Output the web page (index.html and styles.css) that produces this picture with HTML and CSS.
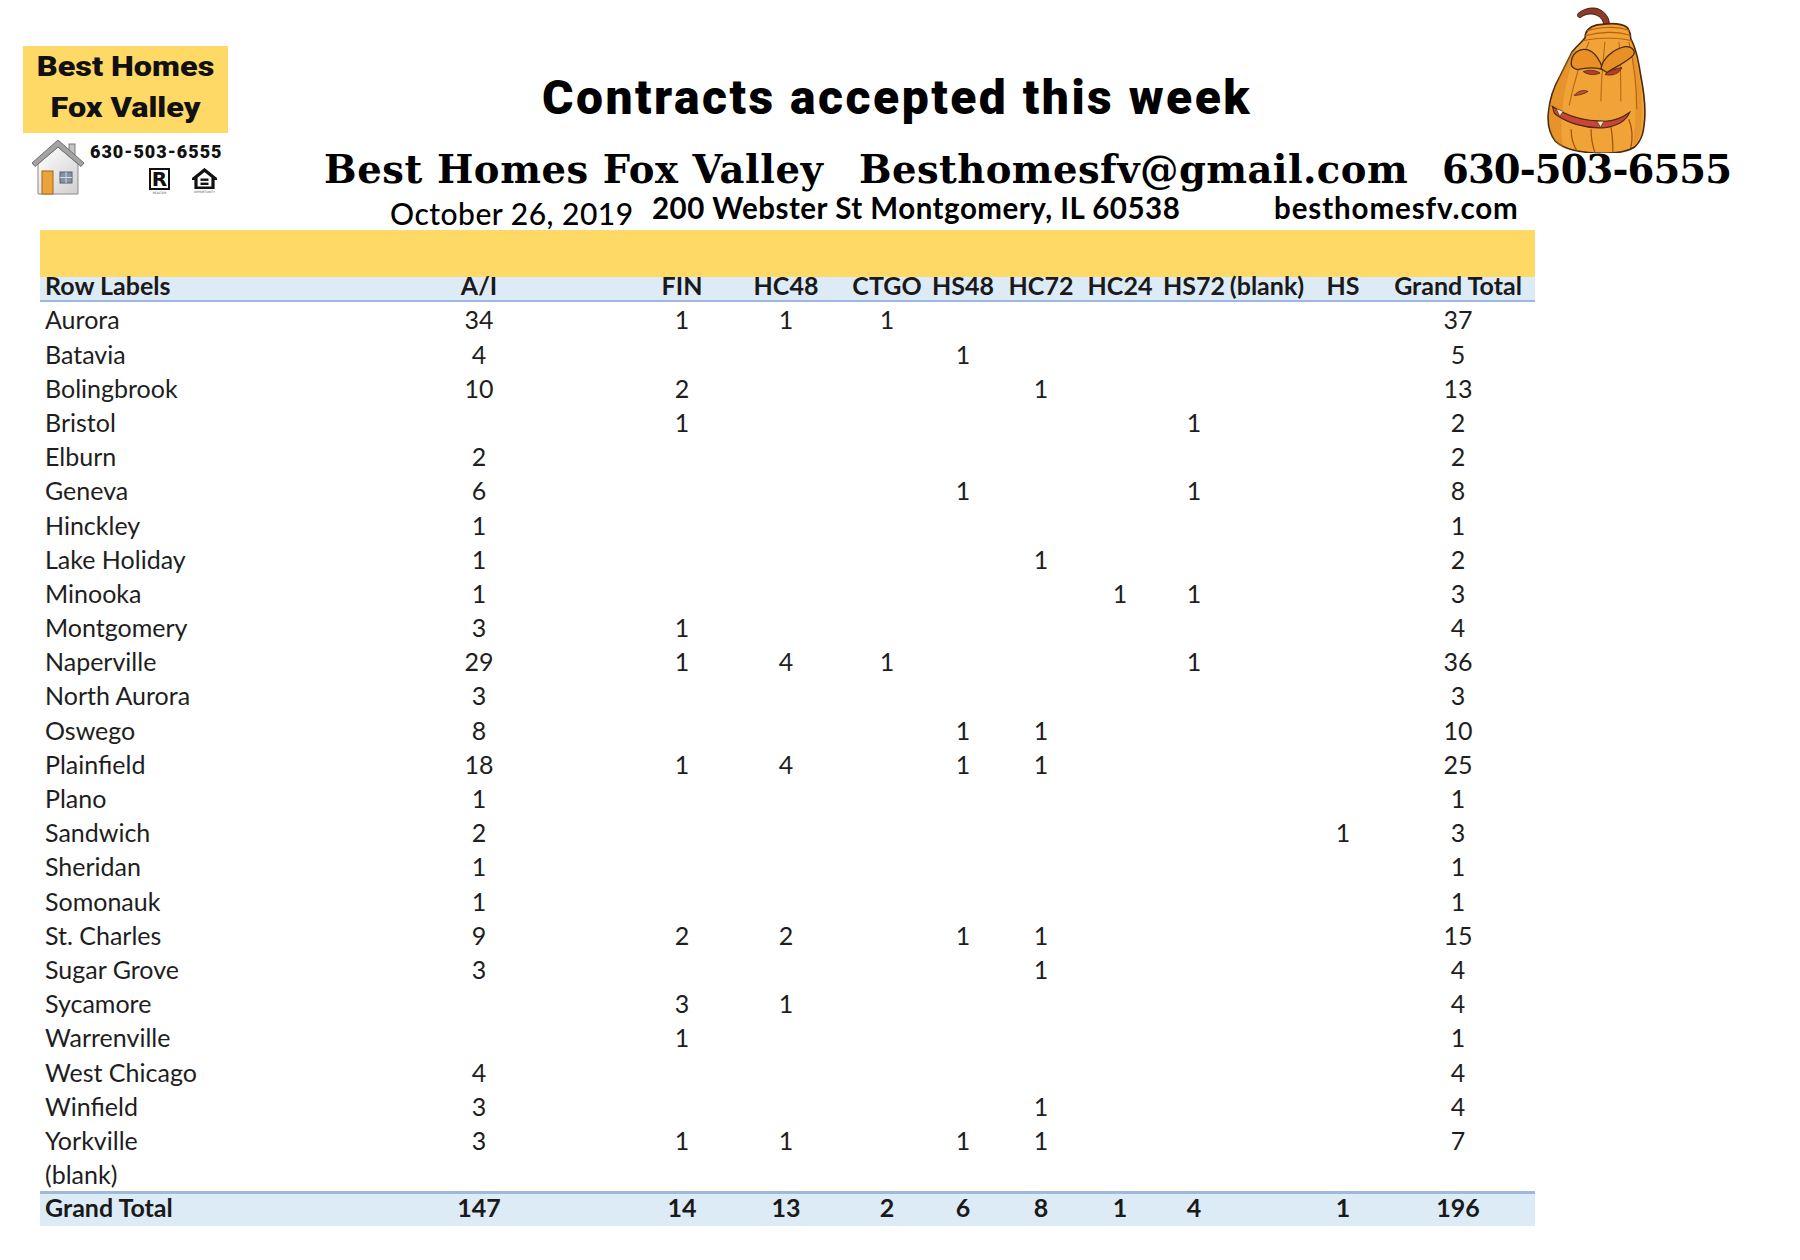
FILE: index.html
```html
<!DOCTYPE html>
<html lang="en">
<head>
<meta charset="utf-8">
<title>Contracts accepted this week</title>
<link rel="stylesheet" href="styles.css">
</head>
<body>
<div class="page">
  <header class="top">
    <div class="logo">
      <div class="logo-box">
        <div class="logo-line">Best Homes</div>
        <div class="logo-line">Fox Valley</div>
      </div>
      <div class="logo-foot">
        <svg class="house" width="54" height="56" viewBox="0 0 54 56">
          <defs>
            <linearGradient id="wall" x1="0" y1="0" x2="1" y2="1">
              <stop offset="0" stop-color="#ffffff"/>
              <stop offset="1" stop-color="#cfcfcf"/>
            </linearGradient>
          </defs>
          <rect x="38" y="5" width="6" height="13" fill="#c4c4c4" stroke="#7a7a7a" stroke-width="1"/>
          <polygon points="7,25 27,8 47,25 47,55 7,55" fill="url(#wall)" stroke="#8a8a8a" stroke-width="1"/>
          <polygon points="27,1 53,24 50,27.5 27,8 4,27.5 1,24" fill="#a3a3a3" stroke="#6e6e6e" stroke-width="1"/>
          <rect x="11" y="32" width="11" height="23" fill="#e9a53c" stroke="#a8690f" stroke-width="1"/>
          <rect x="29" y="33" width="12" height="11" fill="#7f93ab" stroke="#5e5e5e" stroke-width="1"/>
          <line x1="35" y1="33" x2="35" y2="44" stroke="#d9d9d9" stroke-width="1"/>
          <line x1="29" y1="38.5" x2="41" y2="38.5" stroke="#d9d9d9" stroke-width="1"/>
        </svg>
        <div class="contact">
          <div class="logo-phone">630-503-6555</div>
          <div class="badges">
            <div class="badge">
              <div class="realtor">R</div>
              <div class="tiny">REALTOR</div>
            </div>
            <div class="badge">
              <svg width="25" height="21" viewBox="0 0 25 21">
                <polygon points="12.5,2 23,10.5 21,10.5 21,20 4,20 4,10.5 2,10.5" fill="none" stroke="#111" stroke-width="3.2" stroke-linejoin="miter"/>
                <rect x="8.5" y="10.5" width="8" height="2.4" fill="#111"/>
                <rect x="8.5" y="14.6" width="8" height="2.4" fill="#111"/>
              </svg>
              <div class="tiny">OPPORTUNITY</div>
            </div>
          </div>
        </div>
      </div>
    </div>
    <div class="headings">
      <div class="title-row">
        <h1 class="title">Contracts accepted this week</h1>
        <svg class="pumpkin" width="100" height="147" viewBox="0 0 100 148">
          <path d="M62 21 C64 13 58 5 50 2.5 C44 1 36 3 31 7.5 C29.5 9.5 31 12 33.5 11.5 C38 8 44 7 49 9 C54 11 57 15 57 21 Z" fill="#8e3b2b" stroke="#3f1a10" stroke-width="1"/>
          <path d="M60 18 C70 17 80 19 82 24 C84 28 84 30 84 33 C88 40 92 56 94 70 C97 85 99 100 98 114 C97 126 96 134 88 142 C78 148 62 149 48 148 C32 147 18 145 8 136 C2 128 0 118 1 108 C2 95 6 82 13 70 C18 60 22 52 25 46 C30 40 35 36 38 32 C38 26 42 21 50 19 Z" fill="#f2a338" stroke="#4a2a10" stroke-width="1.6"/>
          <path d="M25 46 C18 58 6 82 2 104 C0 122 4 136 16 143 C12 120 14 84 30 44 Z" fill="#d7801c" opacity="0.45"/>
          <path d="M88 50 C94 70 97 100 94 126 C92 134 90 138 86 142 C90 116 90 80 84 46 Z" fill="#d7801c" opacity="0.4"/>
          <path d="M40 25 C52 21 70 20 83 25" fill="none" stroke="#b4600e" stroke-width="1.2"/>
          <path d="M38 30 C52 26 70 25 84 30" fill="none" stroke="#b4600e" stroke-width="1.2"/>
          <path d="M36 35 C48 32 70 31 85 35" fill="none" stroke="#b4600e" stroke-width="1"/>
          <path d="M42 36 C34 54 26 80 22 100" fill="none" stroke="#b86611" stroke-width="1.1"/>
          <path d="M58 36 C56 56 54 78 54 96" fill="none" stroke="#b86611" stroke-width="1.1"/>
          <path d="M72 36 C74 58 74 80 74 96" fill="none" stroke="#b86611" stroke-width="1.1"/>
          <path d="M82 36 C88 60 90 84 90 104" fill="none" stroke="#b86611" stroke-width="1.1"/>
          <path d="M24 124 C24 132 26 140 30 146" fill="none" stroke="#9a520c" stroke-width="1.2"/>
          <path d="M44 124 C44 134 46 142 48 148" fill="none" stroke="#9a520c" stroke-width="1.2"/>
          <path d="M64 122 C66 132 66 140 66 147" fill="none" stroke="#9a520c" stroke-width="1.2"/>
          <path d="M82 114 C86 124 86 134 84 143" fill="none" stroke="#9a520c" stroke-width="1.2"/>
          <path d="M24 58 C24 48 32 42 40 44 C48 46 54 56 56 64 C50 62 40 62 30 64 C26 63 24 61 24 58 Z" fill="#e88f26" stroke="#4a2a10" stroke-width="1.3"/>
          <path d="M54 63 C56 52 66 44 78 41 C84 40 89 44 87 49 C81 56 71 60 60 67 Z" fill="#e88f26" stroke="#4a2a10" stroke-width="1.3"/>
          <path d="M36 66 C42 64 48 64 53 67.5 C47 70 41 69.5 36 66 Z" fill="#b83a2c" stroke="#4a2a10" stroke-width="0.8"/>
          <path d="M58 69 C62 65 68 63 75 62 C73 67.5 66 71 58 69 Z" fill="#b83a2c" stroke="#4a2a10" stroke-width="0.8"/>
          <path d="M27 90 C31 85.5 36 84 41 86 C37 88.5 32 90 27 90 Z" fill="#c8503a" stroke="#4a2a10" stroke-width="0.8"/>
          <path d="M5 101 C18 110 36 116 58 116 C68 116 76 112 83 107 C79 116 70 121 58 122.5 C38 124 18 117 7 108 Z" fill="#c8453a" stroke="#4a2a10" stroke-width="1.1"/>
          <path d="M9 103.5 L12.5 111 L16 106 Z" fill="#f4e7c3" stroke="#4a2a10" stroke-width="0.6"/>
          <path d="M50 116 L53.5 122 L57 116 Z" fill="#f4e7c3" stroke="#4a2a10" stroke-width="0.6"/>
        </svg>
      </div>
      <div class="contact-line">
        <span class="seg1">Best Homes Fox Valley</span>
        <span class="seg2">Besthomesfv@gmail.com</span>
        <span class="seg3">630-503-6555</span>
      </div>
      <div class="info-line">
        <span class="date">October 26, 2019</span>
        <span class="addr">200 Webster St Montgomery, IL 60538</span>
        <span class="site">besthomesfv.com</span>
      </div>
    </div>
  </header>

  <section class="pivot">
    <div class="band"></div>
    <div class="row head">
      <div class="lbl">Row Labels</div>
      <div class="ai">A/I</div>
      <div class="fin">FIN</div>
      <div class="hc48">HC48</div>
      <div class="ctgo">CTGO</div>
      <div class="hs48">HS48</div>
      <div class="hc72">HC72</div>
      <div class="hc24">HC24</div>
      <div class="hs72">HS72</div>
      <div class="blk">(blank)</div>
      <div class="hs">HS</div>
      <div class="gt">Grand Total</div>
    </div>
    <div class="row"><div class="lbl">Aurora</div><div class="ai">34</div><div class="fin">1</div><div class="hc48">1</div><div class="ctgo">1</div><div class="gt">37</div></div>
    <div class="row"><div class="lbl">Batavia</div><div class="ai">4</div><div class="hs48">1</div><div class="gt">5</div></div>
    <div class="row"><div class="lbl">Bolingbrook</div><div class="ai">10</div><div class="fin">2</div><div class="hc72">1</div><div class="gt">13</div></div>
    <div class="row"><div class="lbl">Bristol</div><div class="fin">1</div><div class="hs72">1</div><div class="gt">2</div></div>
    <div class="row"><div class="lbl">Elburn</div><div class="ai">2</div><div class="gt">2</div></div>
    <div class="row"><div class="lbl">Geneva</div><div class="ai">6</div><div class="hs48">1</div><div class="hs72">1</div><div class="gt">8</div></div>
    <div class="row"><div class="lbl">Hinckley</div><div class="ai">1</div><div class="gt">1</div></div>
    <div class="row"><div class="lbl">Lake Holiday</div><div class="ai">1</div><div class="hc72">1</div><div class="gt">2</div></div>
    <div class="row"><div class="lbl">Minooka</div><div class="ai">1</div><div class="hc24">1</div><div class="hs72">1</div><div class="gt">3</div></div>
    <div class="row"><div class="lbl">Montgomery</div><div class="ai">3</div><div class="fin">1</div><div class="gt">4</div></div>
    <div class="row"><div class="lbl">Naperville</div><div class="ai">29</div><div class="fin">1</div><div class="hc48">4</div><div class="ctgo">1</div><div class="hs72">1</div><div class="gt">36</div></div>
    <div class="row"><div class="lbl">North Aurora</div><div class="ai">3</div><div class="gt">3</div></div>
    <div class="row"><div class="lbl">Oswego</div><div class="ai">8</div><div class="hs48">1</div><div class="hc72">1</div><div class="gt">10</div></div>
    <div class="row"><div class="lbl">Plainfield</div><div class="ai">18</div><div class="fin">1</div><div class="hc48">4</div><div class="hs48">1</div><div class="hc72">1</div><div class="gt">25</div></div>
    <div class="row"><div class="lbl">Plano</div><div class="ai">1</div><div class="gt">1</div></div>
    <div class="row"><div class="lbl">Sandwich</div><div class="ai">2</div><div class="hs">1</div><div class="gt">3</div></div>
    <div class="row"><div class="lbl">Sheridan</div><div class="ai">1</div><div class="gt">1</div></div>
    <div class="row"><div class="lbl">Somonauk</div><div class="ai">1</div><div class="gt">1</div></div>
    <div class="row"><div class="lbl">St. Charles</div><div class="ai">9</div><div class="fin">2</div><div class="hc48">2</div><div class="hs48">1</div><div class="hc72">1</div><div class="gt">15</div></div>
    <div class="row"><div class="lbl">Sugar Grove</div><div class="ai">3</div><div class="hc72">1</div><div class="gt">4</div></div>
    <div class="row"><div class="lbl">Sycamore</div><div class="fin">3</div><div class="hc48">1</div><div class="gt">4</div></div>
    <div class="row"><div class="lbl">Warrenville</div><div class="fin">1</div><div class="gt">1</div></div>
    <div class="row"><div class="lbl">West Chicago</div><div class="ai">4</div><div class="gt">4</div></div>
    <div class="row"><div class="lbl">Winfield</div><div class="ai">3</div><div class="hc72">1</div><div class="gt">4</div></div>
    <div class="row"><div class="lbl">Yorkville</div><div class="ai">3</div><div class="fin">1</div><div class="hc48">1</div><div class="hs48">1</div><div class="hc72">1</div><div class="gt">7</div></div>
    <div class="row"><div class="lbl">(blank)</div></div>
    <div class="row total">
      <div class="lbl">Grand Total</div>
      <div class="ai">147</div>
      <div class="fin">14</div>
      <div class="hc48">13</div>
      <div class="ctgo">2</div>
      <div class="hs48">6</div>
      <div class="hc72">8</div>
      <div class="hc24">1</div>
      <div class="hs72">4</div>
      <div class="hs">1</div>
      <div class="gt">196</div>
    </div>
  </section>
</div>
</body>
</html>
```

FILE: styles.css
```css
html, body {
  margin: 0;
  padding: 0;
  background: #ffffff;
}

.page {
  width: 1800px;
  height: 1260px;
  overflow: hidden;
  color: #111;
}

/* ---------- header ---------- */
.top {
  display: flex;
  height: 230px;
}

.logo {
  margin-left: 23px;
  margin-top: 46px;
  width: 205px;
  flex: none;
}

.logo-box {
  height: 87px;
  background: #ffd966;
  padding-top: 1px;
  box-sizing: border-box;
  font-family: "Roboto", "DejaVu Sans", sans-serif;
  font-weight: 900;
  font-size: 27px;
  line-height: 41px;
  text-align: center;
  color: #111;
}

.logo-line {
  white-space: nowrap;
  transform: scaleX(1.2);
}

.logo-foot {
  display: flex;
  margin-top: 6px;
}

.house {
  margin-left: 8px;
  flex: none;
}

.contact {
  margin-left: 5px;
  display: flex;
  flex-direction: column;
}

.logo-phone {
  margin-top: 5px;
  font-family: "Roboto", "DejaVu Sans", sans-serif;
  font-weight: 900;
  font-size: 18px;
  line-height: 16px;
  letter-spacing: 1px;
  white-space: nowrap;
}

.badges {
  display: flex;
  gap: 22px;
  margin-left: 59px;
  margin-top: 8px;
}

.badge {
  display: flex;
  flex-direction: column;
  align-items: center;
}

.realtor {
  width: 21px;
  height: 22px;
  border: 2px solid #111;
  box-sizing: border-box;
  font-family: "DejaVu Sans", sans-serif;
  font-weight: 900;
  font-size: 20px;
  line-height: 19px;
  text-align: center;
  color: #111;
}

.tiny {
  font-family: "DejaVu Sans", sans-serif;
  font-size: 3px;
  line-height: 4px;
  color: #555;
  margin-top: 1px;
}

.headings {
  flex: 1;
  display: flex;
  flex-direction: column;
}

.title-row {
  display: grid;
  grid-template-columns: 314px 1005px 100px;
  height: 151px;
}

.title {
  grid-column: 2;
  margin: 74px 0 0 0;
  font-family: "Roboto", "DejaVu Sans", sans-serif;
  font-weight: 900;
  font-size: 48px;
  line-height: 48px;
  white-space: nowrap;
  letter-spacing: 2.5px;
  color: #000;
}

.pumpkin {
  grid-column: 3;
  margin-top: 6px;
}

.contact-line {
  display: grid;
  grid-template-columns: 535px 583px auto;
  margin-left: 96px;
  font-family: "DejaVu Serif", "Liberation Serif", serif;
  font-weight: bold;
  font-size: 38.5px;
  line-height: 38px;
  white-space: nowrap;
  color: #000;
}

.seg1 { letter-spacing: 0.6px; }
.seg2 { letter-spacing: 0.45px; }
.seg3 { letter-spacing: -0.9px; }

.info-line {
  display: grid;
  grid-template-columns: 262px 622px auto;
  align-items: start;
  margin-left: 162px;
  margin-top: 4px;
  font-family: "Lato", "Open Sans", sans-serif;
  white-space: nowrap;
  color: #000;
}

.date {
  font-size: 30px;
  line-height: 30px;
  font-weight: 500;
  letter-spacing: 0.5px;
  margin-top: 4.5px;
}

.addr {
  font-size: 29.5px;
  line-height: 29.5px;
  font-weight: 700;
  letter-spacing: 0.5px;
}

.site {
  font-size: 29.5px;
  line-height: 29.5px;
  font-weight: 700;
  letter-spacing: 0.9px;
}

/* ---------- pivot table ---------- */
.pivot {
  margin-left: 40px;
  width: 1495px;
  font-family: "Lato", "Open Sans", sans-serif;
  font-size: 25px;
  color: #1e1e1e;
}

.band {
  height: 47px;
  background: #ffd966;
}

.row {
  display: grid;
  grid-template-columns: 409px 60px 143px 60px 44px 60px 41px 60px 16px 60px 18px 60px 19px 60px 14px 60px 13px 60px 16px 60px 55px 60px 47px;
  height: 34.2px;
  align-items: center;
  line-height: 26px;
}

.row > div {
  grid-row: 1;
  display: flex;
  justify-content: center;
  white-space: nowrap;
}

.row > .lbl {
  grid-column: 1;
  justify-content: flex-start;
  padding-left: 5px;
}

.row > .ai { grid-column: 2; }
.row > .fin { grid-column: 4; }
.row > .hc48 { grid-column: 6; }
.row > .ctgo { grid-column: 8; }
.row > .hs48 { grid-column: 10; }
.row > .hc72 { grid-column: 12; }
.row > .hc24 { grid-column: 14; }
.row > .hs72 { grid-column: 16; }
.row > .blk { grid-column: 18; }
.row > .hs { grid-column: 20; }
.row > .gt { grid-column: 22; }

.row.head {
  height: 23.3px;
  background: #ddebf7;
  border-bottom: 2px solid #9db9dc;
  align-items: start;
  line-height: 17px;
  font-weight: 700;
  color: #1a1a1a;
}

.row.total {
  height: 26px;
  padding-bottom: 5.5px;
  background: #ddebf7;
  border-top: 3px solid #9db9dc;
  font-weight: 700;
  color: #1a1a1a;
}
```
